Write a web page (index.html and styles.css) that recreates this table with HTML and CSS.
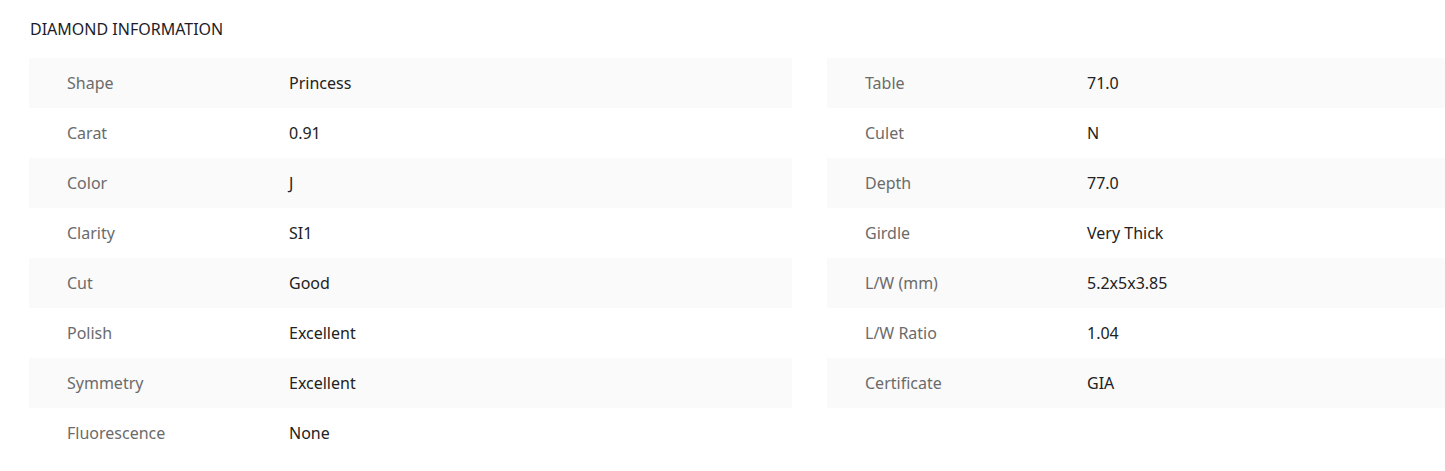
FILE: index.html
```html
<!DOCTYPE html>
<html>
<head>
<meta charset="utf-8">
<link rel="stylesheet" href="styles.css">
</head>
<body>
<section class="info">
  <h2 class="title">DIAMOND INFORMATION</h2>
  <div class="cols">
    <div class="col">
      <div class="row"><span class="label">Shape</span><span class="value">Princess</span></div>
      <div class="row"><span class="label">Carat</span><span class="value">0.91</span></div>
      <div class="row"><span class="label">Color</span><span class="value">J</span></div>
      <div class="row"><span class="label">Clarity</span><span class="value">SI1</span></div>
      <div class="row"><span class="label">Cut</span><span class="value">Good</span></div>
      <div class="row"><span class="label">Polish</span><span class="value">Excellent</span></div>
      <div class="row"><span class="label">Symmetry</span><span class="value">Excellent</span></div>
      <div class="row"><span class="label">Fluorescence</span><span class="value">None</span></div>
    </div>
    <div class="col">
      <div class="row"><span class="label">Table</span><span class="value">71.0</span></div>
      <div class="row"><span class="label">Culet</span><span class="value">N</span></div>
      <div class="row"><span class="label">Depth</span><span class="value">77.0</span></div>
      <div class="row"><span class="label">Girdle</span><span class="value">Very Thick</span></div>
      <div class="row"><span class="label">L/W (mm)</span><span class="value">5.2x5x3.85</span></div>
      <div class="row"><span class="label">L/W Ratio</span><span class="value">1.04</span></div>
      <div class="row"><span class="label">Certificate</span><span class="value">GIA</span></div>
    </div>
  </div>
</section>
</body>
</html>
```
FILE: styles.css
```css
html, body {
  margin: 0;
  padding: 0;
  background: #ffffff;
}
body {
  font-family: "Noto Sans", "Open Sans", sans-serif;
}
.info {
  padding: 18px 0 0 29px;
}
.title {
  margin: 0 0 0 1px;
  font-size: 16px;
  font-weight: 400;
  line-height: 22px;
  color: #1c1c2b;
}
.cols {
  display: grid;
  grid-template-columns: 763px minmax(0, 1fr);
  column-gap: 35px;
  margin-top: 18px;
}
.row {
  display: flex;
  align-items: center;
  height: 50px;
  padding-left: 38px;
  font-size: 16px;
}
.col .row:nth-child(odd) {
  background: #fafafa;
}
.label {
  width: 222px;
  flex-shrink: 0;
  color: #6b6b6b;
}
.value {
  color: #222222;
}
```
